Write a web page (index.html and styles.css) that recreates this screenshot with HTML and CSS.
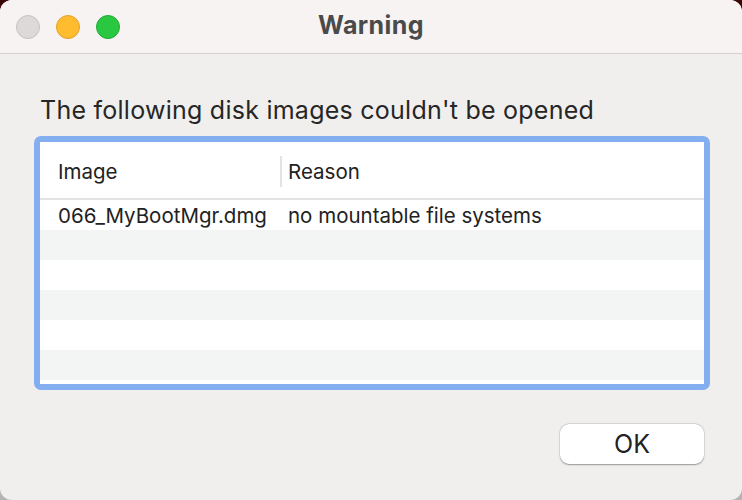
FILE: index.html
```html
<!DOCTYPE html>
<html>
<head>
<meta charset="utf-8">
<link rel="stylesheet" href="styles.css">
</head>
<body>
<div class="window">
  <div class="titlebar">
    <div class="lights">
      <span class="light gray"></span>
      <span class="light yellow"></span>
      <span class="light green"></span>
    </div>
    <div class="title">Warning</div>
  </div>
  <div class="content">
    <div class="message">The following disk images couldn't be opened</div>
    <div class="ring">
      <div class="table">
        <div class="thead">
          <div class="th col1">Image</div>
          <div class="th col2"><span class="sep"></span>Reason</div>
        </div>
        <div class="row"><div class="td col1">066_MyBootMgr.dmg</div><div class="td col2">no mountable file systems</div></div>
        <div class="row alt"></div>
        <div class="row"></div>
        <div class="row alt"></div>
        <div class="row"></div>
        <div class="row alt"></div>
      </div>
    </div>
    <div class="actions">
      <button class="ok">OK</button>
    </div>
  </div>
</div>
</body>
</html>
```
FILE: styles.css
```css
* { box-sizing: border-box; }
html, body { margin: 0; padding: 0; }
body {
  width: 742px;
  height: 500px;
  background: linear-gradient(#3a0707 0 60%, #b5b5b5 60%);
  font-family: "Inter", "Noto Sans", sans-serif;
  overflow: hidden;
}
.window {
  width: 742px;
  height: 500px;
  border-radius: 12px;
  overflow: hidden;
  background: #f0efed;
  display: flex;
  flex-direction: column;
}
.titlebar {
  height: 54px;
  background: #f6f3f2;
  border-bottom: 1px solid #d3d0cf;
  display: flex;
  align-items: center;
  position: relative;
  flex: none;
}
.lights {
  display: flex;
  gap: 16px;
  padding-left: 16px;
  padding-top: 1px;
}
.light {
  width: 24px;
  height: 24px;
  border-radius: 50%;
  display: block;
}
.gray { background: #dcd9d8; border: 1px solid #c6c2c1; }
.yellow { background: #febc2e; border: 1px solid #e1a22a; }
.green { background: #2ac840; border: 1px solid #1fa934; }
.title {
  position: absolute;
  left: 0;
  right: 0;
  top: 0;
  height: 53px;
  line-height: 50px;
  text-align: center;
  font-weight: 700;
  font-size: 25px;
  letter-spacing: 0.4px;
  color: #4a4a4a;
  pointer-events: none;
}
.content {
  flex: 1;
  padding: 40px 32px 0 34px;
  display: flex;
  flex-direction: column;
}
.message {
  font-size: 25px;
  color: #262626;
  padding-left: 6px;
  height: 42px;
  line-height: 32px;
  letter-spacing: 0.25px;
}
.ring {
  width: 676px;
  height: 254px;
  background: #83aff0;
  border-radius: 7px;
  padding: 6px;
}
.table {
  background: #ffffff;
  height: 100%;
  overflow: hidden;
}
.thead {
  display: flex;
  height: 58px;
  align-items: center;
  border-bottom: 2px solid #e3e3e3;
  padding-top: 3px;
}
.th, .td {
  font-size: 20.5px;
  color: #222222;
}
.col1 { width: 241px; padding-left: 18px; flex: none; }
.col2 { display: flex; align-items: center; }
.sep {
  display: block;
  width: 2px;
  height: 31px;
  background: #e3e3e3;
  margin-right: 6px;
}
.th.col2 { margin-left: -1px; }
.row {
  height: 30px;
  display: flex;
  align-items: center;
}
.row .col2 { padding-left: 7px; }
.row.alt { background: #f3f4f4; }
.actions {
  display: flex;
  justify-content: flex-end;
  padding-top: 34px;
  padding-right: 6px;
}
.ok {
  width: 144px;
  height: 40px;
  border: none;
  border-radius: 9px;
  background: #ffffff;
  box-shadow: 0 0.5px 1.5px rgba(0,0,0,0.35), 0 0 0 0.5px rgba(0,0,0,0.08);
  font-family: "Inter", "Noto Sans", sans-serif;
  font-size: 25px;
  color: #222222;
  padding: 0;
}
```
